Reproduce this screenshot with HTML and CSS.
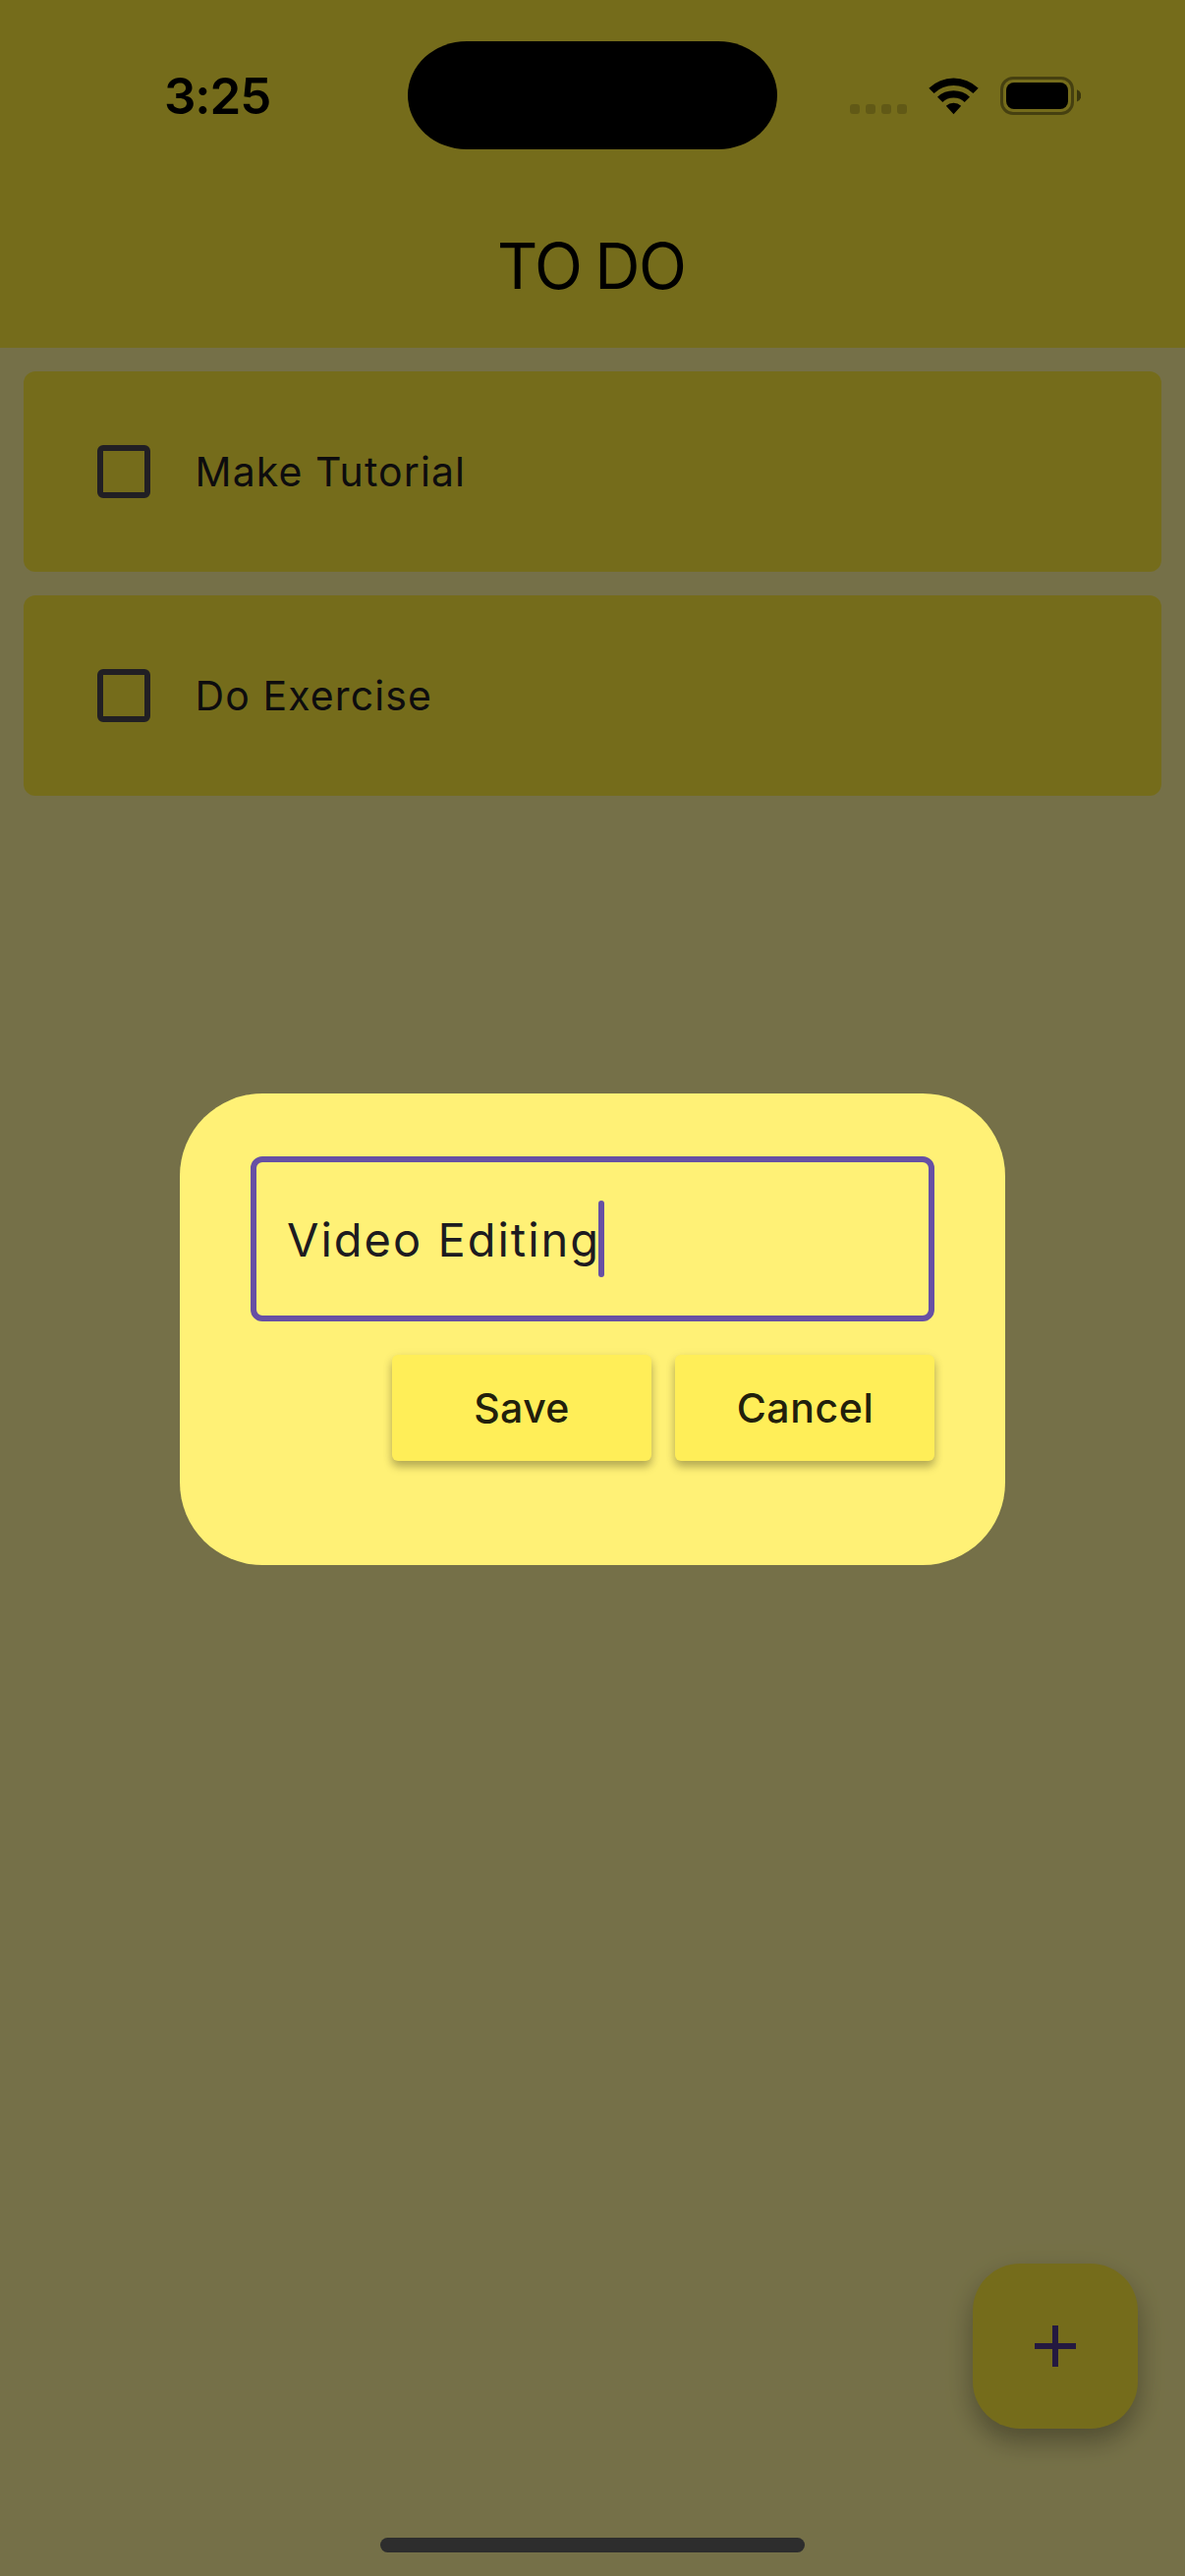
FILE: index.html
```
<!DOCTYPE html>
<html lang="en">
<head>
<meta charset="utf-8">
<title>To Do</title>
<link rel="stylesheet" href="styles.css">
</head>
<body>
<div class="screen">
  <header class="app-bar">
    <div class="status-bar">
      <span class="clock">3:25</span>
      <span class="island"></span>
      <svg class="status-icons" width="240" height="44" viewBox="860 76 240 44" aria-hidden="true">
        <g fill="#000" fill-opacity=".17">
          <rect x="865" y="106" width="10" height="10" rx="3"/>
          <rect x="881" y="106" width="10" height="10" rx="3"/>
          <rect x="897" y="106" width="10" height="10" rx="3"/>
          <rect x="913" y="106" width="10" height="10" rx="3"/>
        </g>
        <path d="M945.3 89.7a36.5 36.5 0 0 1 50.4 0l-5.3 5.2a29 29 0 0 0-39.8 0zM954 98.7a24 24 0 0 1 33 0l-5.3 5.2a16.5 16.5 0 0 0-22.4 0zM962.8 107.7a11.5 11.5 0 0 1 15.4 0l-7.7 8.5z"/>
        <rect x="1019.5" y="79.5" width="72" height="36" rx="11.5" fill="none" stroke="#000" stroke-opacity=".4" stroke-width="3"/>
        <rect x="1024" y="84" width="63" height="27" rx="8"/>
        <path d="M1096 91.3a6.5 6.5 0 0 1 0 12.2z" fill-opacity=".5"/>
      </svg>
    </div>
    <h1 class="title">TO DO</h1>
  </header>
  <main class="tasks">
    <div class="task"><span class="checkbox"></span><span class="task-name">Make Tutorial</span></div>
    <div class="task"><span class="checkbox"></span><span class="task-name">Do Exercise</span></div>
  </main>
  <div class="fab">
    <svg width="42" height="42" viewBox="0 0 42 42" aria-hidden="true"><path d="M18 0h6v18h18v6H24v18h-6V24H0v-6h18z" fill="#4f378b"/></svg>
  </div>
  <div class="home-indicator"></div>
  <div class="scrim">
    <div class="dialog">
      <div class="field"><span class="field-text">Video Editing</span><span class="caret"></span></div>
      <div class="actions">
        <div class="button save">Save</div>
        <div class="button cancel">Cancel</div>
      </div>
    </div>
  </div>
</div>
</body>
</html>
```
FILE: styles.css
```
* { box-sizing: border-box; }

body {
  margin: 0;
  font-family: Inter, "Liberation Sans", sans-serif;
}

.screen {
  position: relative;
  display: flex;
  flex-direction: column;
  width: 1206px;
  height: 2622px;
  overflow: hidden;
  background: #fff59d;
}

.app-bar {
  flex: none;
  height: 354px;
  background: #ffeb3b;
}

.status-bar {
  position: relative;
  z-index: 2;
  display: flex;
  align-items: center;
  height: 194px;
  padding-left: 167px;
}

.clock {
  width: 248px;
  padding-top: 1px;
  font-size: 51px;
  font-weight: 600;
  letter-spacing: -1.1px;
}

.island {
  width: 376px;
  height: 110px;
  border-radius: 60px / 55px;
  background: #000;
}

.status-icons { margin: 2px 0 0 69px; }

.title {
  margin: 0;
  padding-left: 506px;
  font-size: 64px;
  font-weight: 400;
  line-height: 154px;
  letter-spacing: -1.5px;
  word-spacing: -2.6px;
}

.tasks {
  flex: 1;
  display: flex;
  flex-direction: column;
  gap: 24px;
  padding: 24px;
}

.task {
  display: flex;
  align-items: center;
  gap: 45.5px;
  height: 204px;
  padding-left: 75px;
  border-radius: 12px;
  background: #ffeb3b;
}

.checkbox {
  width: 54px;
  height: 54px;
  border: 6px solid #49454f;
  border-radius: 6px;
}

.task-name {
  color: #1d1b20;
  font-size: 41px;
  font-weight: 370;
  letter-spacing: 1.1px;
}

.fab {
  flex: none;
  align-self: flex-end;
  display: flex;
  align-items: center;
  justify-content: center;
  width: 168px;
  height: 168px;
  margin: 0 48px 111px 0;
  border-radius: 48px;
  background: #ffeb3b;
  box-shadow: 0 14px 27px rgba(0, 0, 0, .28), 0 5px 36px rgba(0, 0, 0, .05);
}

.home-indicator {
  position: relative;
  z-index: 2;
  flex: none;
  align-self: center;
  width: 432px;
  height: 15px;
  margin-bottom: 24px;
  border-radius: 8px;
  background: #2d2d2d;
}

.scrim {
  position: absolute;
  inset: 0;
  z-index: 1;
  padding: 1113px 183px 0;
  background: rgba(0, 0, 0, .54);
}

.dialog {
  height: 480px;
  padding: 64px 72px 0;
  border-radius: 84px;
  background: #fff176;
}

.field {
  display: flex;
  align-items: center;
  height: 168px;
  padding-left: 31px;
  border: 6px solid #6750a4;
  border-radius: 12px;
}

.field-text {
  width: 317px;
  color: #1d1b20;
  font-size: 47px;
  font-weight: 370;
  letter-spacing: 2px;
  white-space: nowrap;
}

.caret {
  width: 6px;
  height: 78px;
  border-radius: 3px;
  background: #6750a4;
}

.actions {
  display: flex;
  justify-content: flex-end;
  gap: 24px;
  margin-top: 34px;
}

.button {
  width: 264px;
  height: 108px;
  border-radius: 6px;
  background: #ffee58;
  box-shadow: 0 6px 9px rgba(0, 0, 0, .25), 0 2px 12px rgba(0, 0, 0, .08);
  color: #22200c;
  font-size: 41px;
  font-weight: 500;
  line-height: 108px;
  text-align: center;
}

.save { letter-spacing: .4px; }

.cancel {
  padding-left: 1px;
  letter-spacing: .6px;
}
```
